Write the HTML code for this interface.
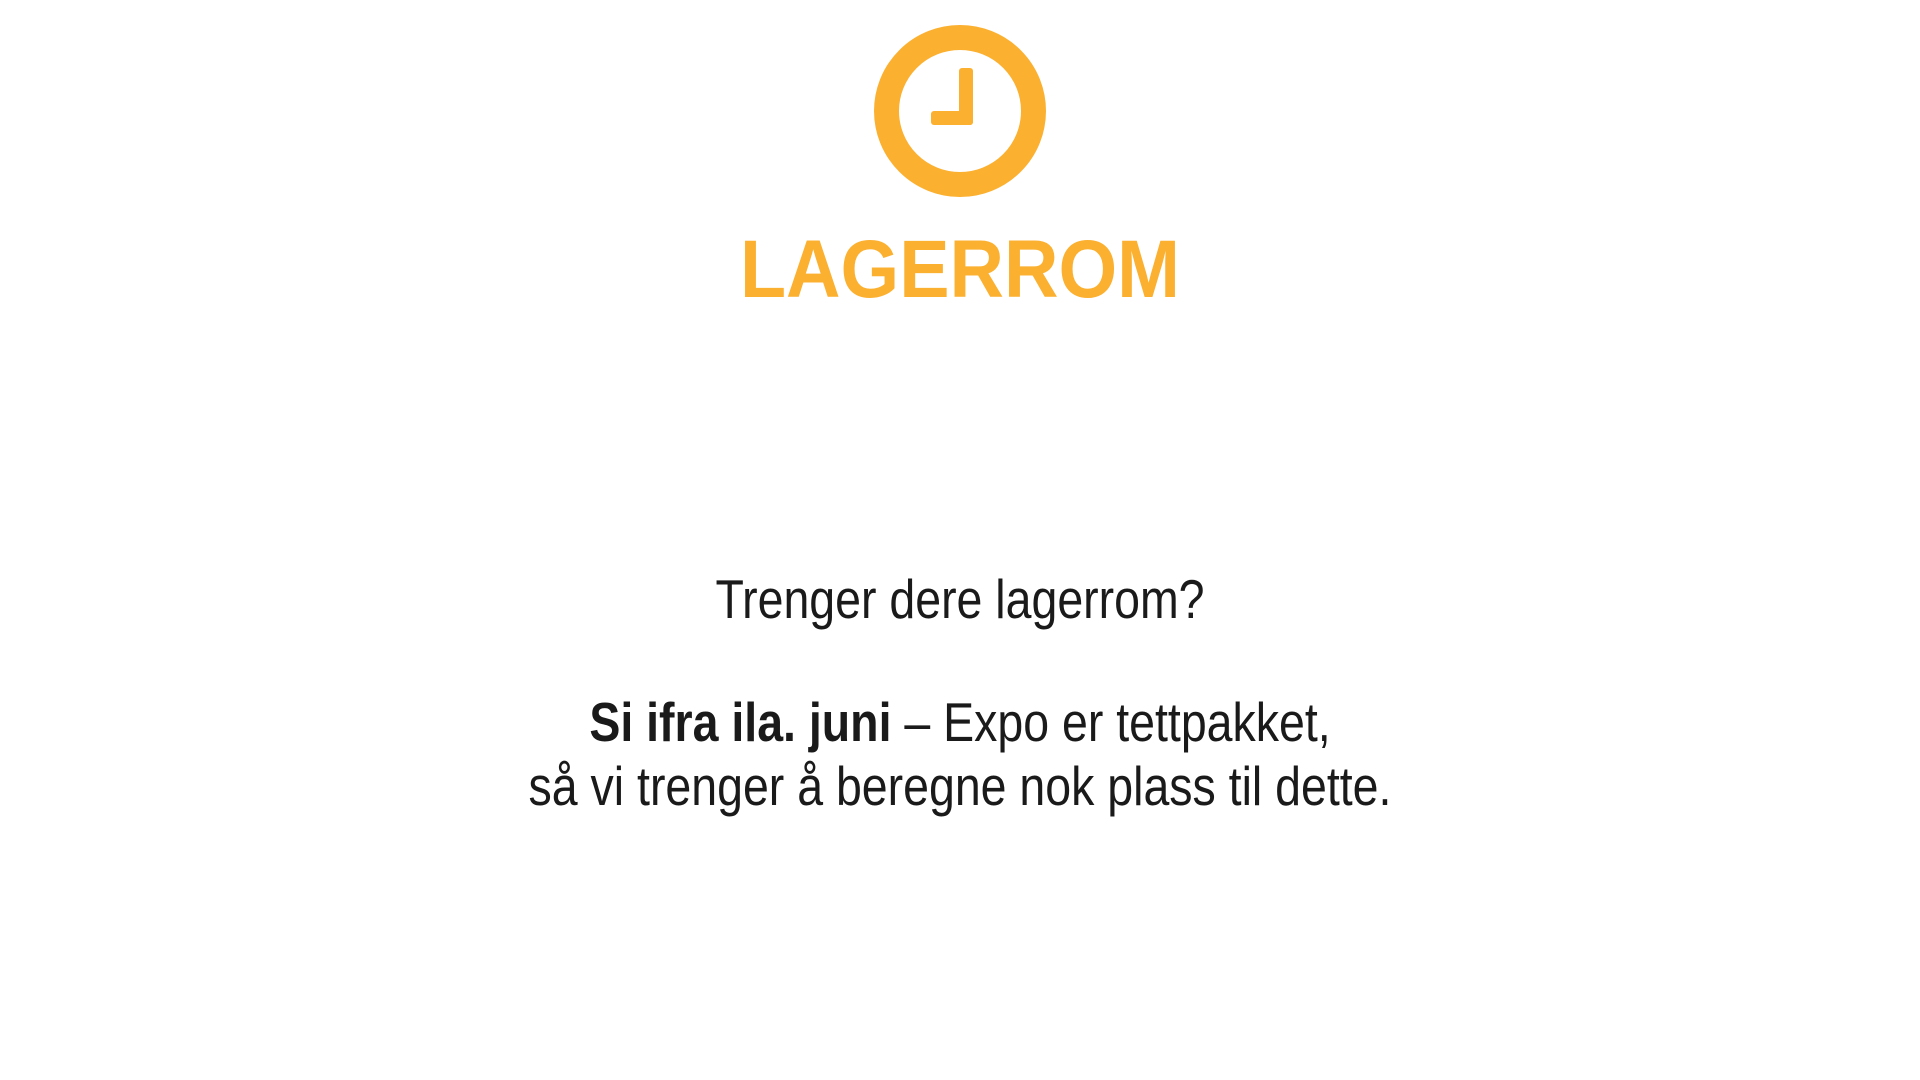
<!DOCTYPE html>
<html><head><meta charset="utf-8"><style>
html,body{margin:0;padding:0;background:#fff;width:1920px;height:1080px;overflow:hidden}
.l{position:absolute;left:0;width:1920px;text-align:center;font-family:"Liberation Sans",sans-serif;white-space:nowrap}
.t{font-size:55px;color:#1a1a1a;line-height:1;transform:scaleX(0.845);transform-origin:960px 0}
b{font-weight:bold}
.h{font-size:82px;font-weight:bold;color:#fbb030;line-height:1;transform:scaleX(0.92);transform-origin:960px 0}
</style></head><body>
<svg style="position:absolute;left:0;top:0" width="1920" height="300">
<circle cx="960" cy="111" r="73.5" fill="none" stroke="#fbb030" stroke-width="25"/>
<rect x="959" y="68" width="14" height="57" rx="3" fill="#fbb030"/>
<rect x="931" y="111" width="42" height="14" rx="3" fill="#fbb030"/>
</svg>
<div class="l h" style="top:229px">LAGERROM</div>
<div class="l t" style="top:572px">Trenger dere lagerrom?</div>
<div class="l t" style="top:695px"><b>Si ifra ila. juni</b> – Expo er tettpakket,</div>
<div class="l t" style="top:759px">så vi trenger å beregne nok plass til dette.</div>
</body></html>
